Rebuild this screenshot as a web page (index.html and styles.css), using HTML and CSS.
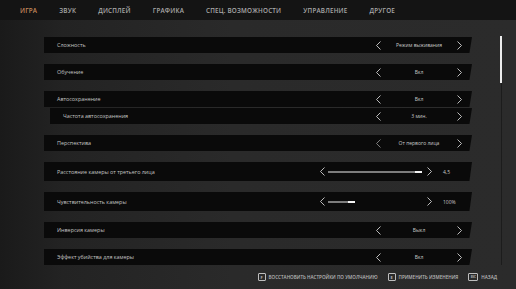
FILE: index.html
```
<!DOCTYPE html>
<html lang="ru">
<head>
    <meta charset="UTF-8">
    <meta name="viewport" content="width=device-width, initial-scale=1.0">
    <title>Настройки — Игра</title>
    <link rel="stylesheet" href="styles.css">
</head>
<body>

    <nav class="tabs">
        <span class="tab active">Игра</span>
        <span class="tab">Звук</span>
        <span class="tab">Дисплей</span>
        <span class="tab">Графика</span>
        <span class="tab">Спец. возможности</span>
        <span class="tab">Управление</span>
        <span class="tab">Другое</span>
    </nav>

    <main class="settings">
        <div class="list">
            <div class="row">
                <span class="label">Сложность</span>
                <div class="picker">
                    <svg class="arrow" viewBox="0 0 5 9"><polyline points="4.5,0.5 0.5,4.5 4.5,8.5"/></svg>
                    <span class="value">Режим выживания</span>
                    <svg class="arrow" viewBox="0 0 5 9"><polyline points="0.5,0.5 4.5,4.5 0.5,8.5"/></svg>
                </div>
            </div>

            <div class="row">
                <span class="label">Обучение</span>
                <div class="picker">
                    <svg class="arrow" viewBox="0 0 5 9"><polyline points="4.5,0.5 0.5,4.5 4.5,8.5"/></svg>
                    <span class="value">Вкл</span>
                    <svg class="arrow" viewBox="0 0 5 9"><polyline points="0.5,0.5 4.5,4.5 0.5,8.5"/></svg>
                </div>
            </div>

            <div class="group">
                <div class="row">
                    <span class="label">Автосохранение</span>
                    <div class="picker">
                        <svg class="arrow" viewBox="0 0 5 9"><polyline points="4.5,0.5 0.5,4.5 4.5,8.5"/></svg>
                        <span class="value">Вкл</span>
                        <svg class="arrow" viewBox="0 0 5 9"><polyline points="0.5,0.5 4.5,4.5 0.5,8.5"/></svg>
                    </div>
                </div>
                <div class="row sub">
                    <span class="label">Частота автосохранения</span>
                    <div class="picker">
                        <svg class="arrow" viewBox="0 0 5 9"><polyline points="4.5,0.5 0.5,4.5 4.5,8.5"/></svg>
                        <span class="value">3 мин.</span>
                        <svg class="arrow" viewBox="0 0 5 9"><polyline points="0.5,0.5 4.5,4.5 0.5,8.5"/></svg>
                    </div>
                </div>
            </div>

            <div class="row">
                <span class="label">Перспектива</span>
                <div class="picker">
                    <svg class="arrow dim" viewBox="0 0 5 9"><polyline points="4.5,0.5 0.5,4.5 4.5,8.5"/></svg>
                    <span class="value">От первого лица</span>
                    <svg class="arrow" viewBox="0 0 5 9"><polyline points="0.5,0.5 4.5,4.5 0.5,8.5"/></svg>
                </div>
            </div>

            <div class="row tall">
                <span class="label">Расстояние камеры от третьего лица</span>
                <div class="slider">
                    <svg class="arrow" viewBox="0 0 5 9"><polyline points="4.5,0.5 0.5,4.5 4.5,8.5"/></svg>
                    <div class="track"><div class="fill" style="width: 100%"></div></div>
                    <svg class="arrow" viewBox="0 0 5 9"><polyline points="0.5,0.5 4.5,4.5 0.5,8.5"/></svg>
                    <span class="amount">4,5</span>
                </div>
            </div>

            <div class="row tall">
                <span class="label">Чувствительность камеры</span>
                <div class="slider">
                    <svg class="arrow" viewBox="0 0 5 9"><polyline points="4.5,0.5 0.5,4.5 4.5,8.5"/></svg>
                    <div class="track"><div class="fill" style="width: 29%"></div></div>
                    <svg class="arrow" viewBox="0 0 5 9"><polyline points="0.5,0.5 4.5,4.5 0.5,8.5"/></svg>
                    <span class="amount">100%</span>
                </div>
            </div>

            <div class="row">
                <span class="label">Инверсия камеры</span>
                <div class="picker">
                    <svg class="arrow" viewBox="0 0 5 9"><polyline points="4.5,0.5 0.5,4.5 4.5,8.5"/></svg>
                    <span class="value">Выкл</span>
                    <svg class="arrow" viewBox="0 0 5 9"><polyline points="0.5,0.5 4.5,4.5 0.5,8.5"/></svg>
                </div>
            </div>

            <div class="row">
                <span class="label">Эффект убийства для камеры</span>
                <div class="picker">
                    <svg class="arrow" viewBox="0 0 5 9"><polyline points="4.5,0.5 0.5,4.5 4.5,8.5"/></svg>
                    <span class="value">Вкл</span>
                    <svg class="arrow" viewBox="0 0 5 9"><polyline points="0.5,0.5 4.5,4.5 0.5,8.5"/></svg>
                </div>
            </div>
        </div>

        <div class="scrollbar"><div class="thumb"></div></div>
    </main>

    <footer class="hints">
        <span class="hint"><span class="key">F</span>Восстановить настройки по умолчанию</span>
        <span class="hint"><span class="key">E</span>Применить изменения</span>
        <span class="hint"><span class="key wide">Esc</span>Назад</span>
    </footer>

</body>
</html>
```

FILE: styles.css
```
body { margin: 0; width: 516px; height: 289px; overflow: hidden; display: flex; flex-direction: column; font-family: 'Open Sans', 'Liberation Sans', sans-serif; color: #c9c9c9; background: linear-gradient(90deg, #1a1a1a 0%, #232323 12%, #2a2a2a 45%, #2b2b2b 100%); }

/* Вкладки */
.tabs { height: 20px; display: flex; align-items: center; gap: 22px; padding-left: 20px; background-color: #141414; box-sizing: border-box; }
.tab { font-size: 6.3px; font-weight: 600; text-transform: uppercase; letter-spacing: 0.2px; color: #a9a9a9; }
.tab.active { color: #c88b5c; }

/* Список настроек */
.settings { flex: 1; display: flex; min-height: 0; }
.list { width: 428px; margin-left: 44px; padding-top: 17px; display: flex; flex-direction: column; gap: 11px; }
.group { display: flex; flex-direction: column; gap: 1px; }
.row { height: 16px; display: flex; align-items: center; justify-content: space-between; background-color: #0a0a0a; padding: 0 10px 0 13px; clip-path: polygon(0 0, 100% 0, 99.4% 100%, 0 100%); }
.row.tall { height: 19px; }
.row.sub { margin-left: 6px; padding-left: 13px; }
.label { font-size: 5.4px; color: #c4c4c4; }

.arrow { width: 5px; height: 9px; fill: none; stroke: #cfcfcf; stroke-width: 0.9; }
.arrow.dim { stroke: #8a8a8a; }

.picker { display: flex; align-items: center; width: 86px; }
.picker .value { flex: 1; text-align: center; font-size: 5px; color: #c8c8c8; }

.slider { display: flex; align-items: center; width: 142px; }
.track { width: 94px; height: 2px; margin: 0 5px 0 3px; }
.fill { height: 100%; background-color: #7c7c7c; border-right: 7px solid #f2f2f2; box-sizing: border-box; }
.amount { margin-left: 11px; font-size: 5px; color: #c8c8c8; }

/* Полоса прокрутки */
.scrollbar { width: 2px; margin-left: 28px; margin-top: 16px; background: linear-gradient(90deg, transparent 0, transparent 50%, #1c1c1c 50%); }
.thumb { height: 47px; background-color: #ececec; }

/* Подсказки */
.hints { height: 24px; display: flex; align-items: center; justify-content: flex-end; gap: 10px; padding: 0 19px 0 0; box-sizing: border-box; }
.hint { display: flex; align-items: center; gap: 3px; font-size: 4.6px; font-weight: 600; text-transform: uppercase; color: #b9b9b9; }
.key { width: 6px; height: 6px; border: 1px solid #bdbdbd; border-radius: 1px; display: flex; align-items: center; justify-content: center; font-size: 4px; font-weight: 700; }
.key.wide { width: 8px; font-size: 3px; }
```
